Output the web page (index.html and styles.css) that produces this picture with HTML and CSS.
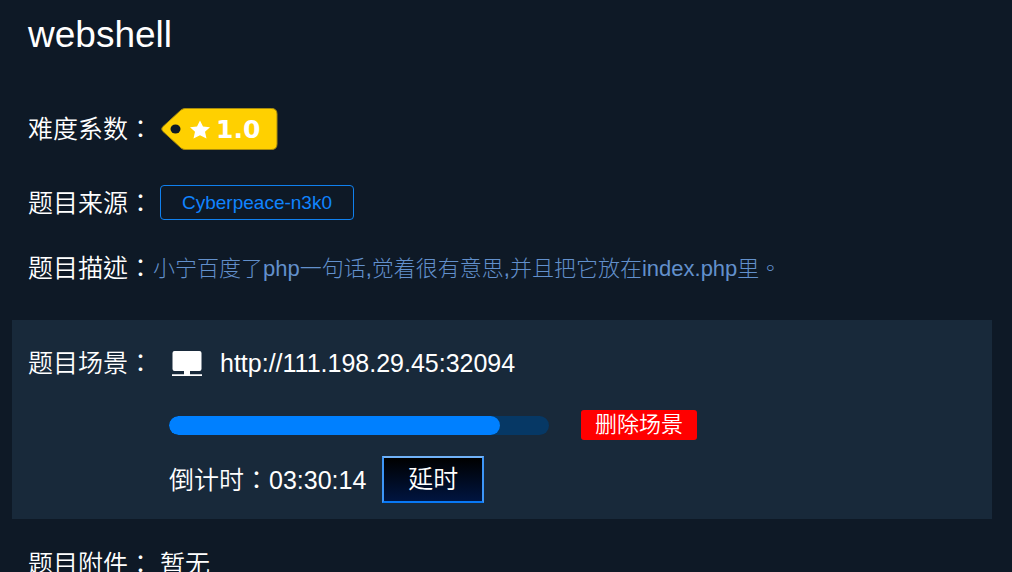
FILE: index.html
```html
<!DOCTYPE html>
<html lang="zh-Hant">
<head>
<meta charset="utf-8">
<meta name="viewport" content="width=device-width, initial-scale=1">
<title>webshell</title>
<link rel="stylesheet" href="styles.css">
</head>
<body>
<main class="challenge">
  <h1 class="title">webshell</h1>
  <div class="row difficulty">
    <span class="label">难度系数：</span>
    <svg class="tag" width="118" height="44" viewBox="0 0 118 44" role="img" aria-label="1.0">
      <path fill="#ffd000" stroke="#a88b0c" fill-rule="evenodd" d="M24 1.5H110.500Q116 1.500 116 7V37Q116 42.500 110.500 42.500H24Q22 42.500 20 41L1.500 24Q0 22 1.500 20L20 3Q22 1.500 24 1.500Z"/>
      <ellipse cx="14.500" cy="22" rx="5" ry="4.500" fill="#0e1926"/>
      <path fill="#fff" d="M39 13.500L42 19.500L49 20.300L44 24.800L45.500 31.500L39 28.300L32.500 31.500L34 24.800L29 20.300L36 19.500Z"/>
      <text class="tag-score" x="55" y="31">1.0</text>
    </svg>
  </div>
  <div class="row source">
    <span class="label">题目来源：</span>
    <a class="author" href="#">Cyberpeace-n3k0</a>
  </div>
  <div class="row description">
    <span class="label">题目描述：</span>
    <p class="desc-text">小宁百度了php一句话,觉着很有意思,并且把它放在index.php里。</p>
  </div>
  <section class="scene">
    <span class="label">题目场景：</span>
    <div class="scene-body">
      <div class="address">
        <svg class="monitor" width="30" height="28" viewBox="0 0 30 28" aria-hidden="true">
          <path fill="#fff" d="M2.500 2H27.500Q29.500 2 29.500 4V20Q29.500 22 27.500 22H18V25.200H30V27H0V25.200H12V22H2.500Q.5 22 .5 20V4Q.5 2 2.500 2Z"/>
        </svg>
        <a class="url" href="#">http://111.198.29.45:32094</a>
      </div>
      <div class="life">
        <div class="bar" role="progressbar" aria-label="倒计时" aria-valuenow="87" aria-valuemin="0" aria-valuemax="100">
          <div class="bar-fill" style="width: 87%"></div>
        </div>
        <button class="delete" type="button">删除场景</button>
      </div>
      <div class="timer">
        <span>倒计时：03:30:14</span>
        <button class="extend" type="button">延时</button>
      </div>
    </div>
  </section>
  <div class="row attachment">
    <span class="label">题目附件：</span>
    <span>暂无</span>
  </div>
</main>
</body>
</html>
```
FILE: styles.css
```css
* {
  box-sizing: border-box;
}

body {
  margin: 0;
  background: #0e1926;
  color: #fff;
  font: 350 25px/30px "Liberation Sans", "Noto Sans CJK TC", sans-serif;
}

.challenge {
  padding: 13px 20px 0 12px;
}

.title {
  margin: 0 16px 50px;
  font-size: 37px;
  font-weight: 400;
  line-height: 44px;
}

.row {
  display: flex;
  align-items: center;
  padding: 0 16px;
}

.label {
  flex: none;
  width: 125px;
  white-space: nowrap;
}

.difficulty {
  gap: 8px;
  margin-bottom: 34px;
}

.tag-score {
  fill: #fff;
  font: bold 25px "DejaVu Sans", sans-serif;
}

.source {
  gap: 7px;
  margin-bottom: 33px;
}

.author {
  padding: 1px 21px 0;
  border: 1px solid #1080ee;
  border-radius: 4px;
  color: #1084ff;
  font-size: 19px;
  font-weight: 400;
  line-height: 32px;
  text-decoration: none;
}

.description {
  align-items: flex-start;
  margin-bottom: 36px;
}

.desc-text {
  margin: 0;
  color: #6290cc;
  font-weight: 300;
  font-size: 22px;
  line-height: 32px;
}

.scene {
  display: flex;
  gap: 16px;
  margin-top: -1px;
  padding: 28px 16px 16px;
  background: #18293a;
}

.scene-body {
  flex: 1;
}

.address {
  display: flex;
  align-items: center;
  gap: 18px;
  padding-left: 3px;
}

.url {
  color: #fff;
  text-decoration: none;
}

.life {
  display: flex;
  align-items: center;
  gap: 32px;
  margin: 32px 0 16px;
}

.bar {
  width: 380px;
  height: 19px;
  overflow: hidden;
  border-radius: 10px;
  background: #063865;
}

.bar-fill {
  height: 100%;
  border-radius: 10px;
  background: #0080ff;
}

.delete {
  padding: 0 14px;
  border: 0;
  border-radius: 3px;
  background: #f00;
  color: #fff;
  font: inherit;
  font-size: 22px;
  line-height: 30px;
}

.timer {
  display: flex;
  align-items: center;
  gap: 16px;
}

.extend {
  padding: 0 24px;
  border: 2px solid;
  border-color: #70b2f8 #3d96f8 #0878f5;
  background: linear-gradient(#000, #001540);
  color: #fff;
  font: inherit;
  line-height: 43px;
}

.attachment {
  gap: 7px;
  margin-top: 30px;
}
```
